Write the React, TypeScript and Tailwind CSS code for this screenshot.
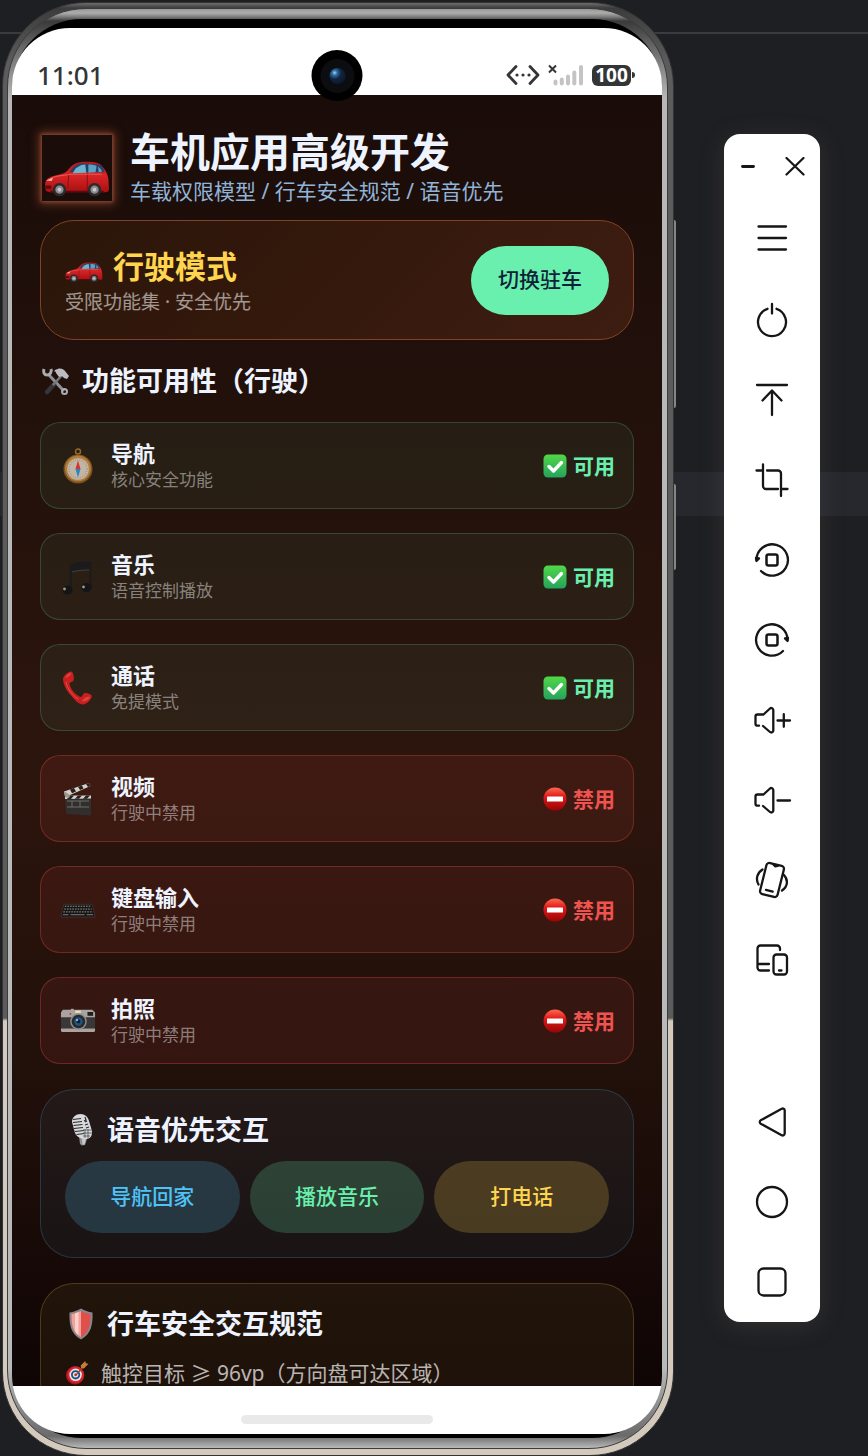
import { useState } from "react";
import type { ReactNode } from "react";
import clsx from "clsx";

type Feature = {
  id: string;
  name: string;
  desc: string;
  allowed: boolean;
  icon: ReactNode;
};

type ToolButton = {
  label: string;
  icon: ReactNode;
};

/* ---------- emoji style icons ---------- */

function CarIcon({ className }: { className: string }) {
  return (
    <svg viewBox="0 0 64 64" className={className} aria-hidden="true">
      <defs>
        <linearGradient id="carBody" x1="0" y1="0" x2="0" y2="1">
          <stop offset="0" stopColor="#b51a1c" />
          <stop offset="0.45" stopColor="#d82527" />
          <stop offset="1" stopColor="#a80f12" />
        </linearGradient>
      </defs>
      <path
        fill="url(#carBody)"
        d="M1 49c0-6 3-8 11-10 6-1 9-2 12-6 4-5 8-7 16-7 10 0 14 1 17 5 3 3 5 8 5.500 12l.5 9c0 3-2 3.500-5 3.500H6c-4 0-5-2-5-6.500z"
      />
      <path fill="#24416b" d="M25 36c3-5 7-8 13-8.500l17 1.500c2 2 3 4 3.500 7z" />
      <path fill="#6fb4cf" d="M28 37c2-5 6-8 12-8.500L41 36.500z" />
      <path fill="#5ba3c4" d="M43 28.500c4 0 6 .5 8 1.500l-1 6-7 .5zM52.500 30.500c2 1.500 3 3 4 5l-3.500.5z" />
      <path fill="none" stroke="#7d0c0f" strokeWidth="0.8" d="M42 37v17M24 38l-1 14" />
      <path fill="#f6b0a8" d="M2 44l7-3-1.500 3.500z" />
      <path fill="#5c0a0c" d="M1 49h6v3H1.500zM6 54h52v1.500H6z" />
      <path fill="none" stroke="#ff7a70" strokeWidth="0.6" d="M9 41c6-2 13-2 18-3h29" />
      {[15, 49].map((cx) => (
        <g key={cx}>
          <circle cx={cx} cy="53" r="6.500" fill="#2a2a2c" />
          <circle cx={cx} cy="53" r="4" fill="#8c8c90" />
          <circle cx={cx} cy="53" r="1.800" fill="#c9c9cc" />
        </g>
      ))}
    </svg>
  );
}

function ToolsIcon() {
  return (
    <svg viewBox="0 0 32 32" className="size-8" aria-hidden="true">
      <path stroke="#8d9094" strokeWidth="3" d="M8 9l16 17" />
      <path fill="none" stroke="#a9acb0" strokeWidth="3" d="M4 4c-1 3 0 6 3 6s5-3 4-6" />
      <circle cx="24.500" cy="26.500" r="2.500" fill="none" stroke="#a9acb0" strokeWidth="2" />
      <path stroke="#34363a" strokeWidth="4.500" strokeLinecap="round" d="M7 27l7-7.500" />
      <path stroke="#77797d" strokeWidth="2.500" d="M13 20L23 9" />
      <path fill="#b9bcc0" d="M15 5c4-2.500 8-2 10 1l4 5-2 3-3-1-2-2-3 1-3-4c0-1-1-2-2-1.500z" />
    </svg>
  );
}

function CompassIcon() {
  return (
    <svg viewBox="0 0 36 36" className="size-9" aria-hidden="true">
      <circle cx="18" cy="3.500" r="2.500" fill="none" stroke="#9a6a2c" strokeWidth="1.400" />
      <circle cx="18" cy="21" r="14.500" fill="#7d5120" />
      <circle cx="18" cy="20.600" r="13" fill="#b27c3c" />
      <circle cx="18" cy="21" r="10.800" fill="#c3b5a4" />
      <circle cx="18" cy="21" r="9" fill="none" stroke="#7c6c5c" strokeWidth="1" strokeDasharray="0.6 1.700" />
      <path fill="#d8322a" d="M18 12.500l2.500 8.500h-5z" />
      <path fill="#2687c4" d="M18 29.500l2.500-8.500h-5z" />
    </svg>
  );
}

function MusicIcon() {
  return (
    <svg viewBox="0 0 36 36" className="size-9" aria-hidden="true">
      <path fill="#1c1b1b" d="M9.500 6c7-3 14-4 22-4v27h-2V11c-6 0-12 .5-17.500 2v18H9.500z" />
      <ellipse cx="7.500" cy="31" rx="5" ry="4.500" fill="#151515" />
      <ellipse cx="26.500" cy="28.500" rx="5.200" ry="4.500" fill="#151515" />
      <path stroke="#4b4947" strokeWidth="0.800" fill="none" d="M12 13c5-1.500 11-2 17.500-2" />
      <circle cx="4.500" cy="30" r="1.400" fill="#9b9794" />
      <circle cx="23.500" cy="28" r="1.400" fill="#9b9794" />
    </svg>
  );
}

function PhoneIcon() {
  return (
    <svg viewBox="0 0 36 36" className="size-9" aria-hidden="true">
      <path
        fill="#c81f20"
        d="M3 8.500C4 5 9 1 11.500 1.500c2 1 3 7 2 9-1 1.500-3 1.500-4 2.500.5 6 6 12 11 14 2 0 2-3 4-4 2-.5 7 1 7.500 3-1 4-5 8-9 8.500-4 0-8-4-12-9C6 20 3 14 3 8.500z"
      />
      <path fill="none" stroke="#e8504a" strokeWidth="1" d="M6 12c1 6 6 13 12 17" />
      <path fill="#df423c" d="M5 8c1-3 4-5 6-5 1 2-4 5-6 5zM22 31c2-3 5-5 8-4-1 3-5 5-8 4z" />
    </svg>
  );
}

function ClapperIcon() {
  return (
    <svg viewBox="0 0 36 36" className="size-9" aria-hidden="true">
      <path fill="#302f2e" d="M5 17l26-1v17l-1 1.500L6 33z" />
      <path fill="#d5d0ca" d="M5 14.500h26v3L5 18z" />
      <path fill="#242322" d="M10 14.500h4l-3 3.500H7zM18 14.500h4l-3 3.300h-4zM26 14.500h4l-3 3.200h-4z" />
      <path fill="#d5d0ca" d="M4 10.500l25-8.500 1.500 3L10 14l-5 1z" />
      <path fill="#242322" d="M10 8.500l4-1.400 2 3.400-4 1.800zM18 5.800l4-1.400 1.500 3-3.500 1.600zM26 3l3-1 1.500 3-2.500 1z" />
      <path fill="#9b9791" d="M4 10l6 4-1 3-4-1z" />
      <path fill="none" stroke="#77736e" strokeWidth="0.900" d="M7 20h22M12 20v6M20 20v6M7 26h22" />
    </svg>
  );
}

function KeyboardIcon() {
  return (
    <svg viewBox="0 0 38 36" className="h-9 w-9" aria-hidden="true">
      <path fill="#141414" d="M4 12h30l3 13H1z" />
      <path stroke="#9c9692" strokeWidth="1" strokeDasharray="1.800 1" fill="none" d="M5 14h28M4.500 17h29M3.500 20h31" />
      <path stroke="#8a8480" strokeWidth="1" fill="none" d="M3 23h6M11 23h15M28 23h7" />
      <path stroke="#4b4441" strokeWidth="0.600" fill="none" d="M4 12h30l3 13.500H1z" />
    </svg>
  );
}

function CameraIcon() {
  return (
    <svg viewBox="0 0 38 36" className="h-9 w-9" aria-hidden="true">
      <path fill="#a9a49f" d="M1 9l2-3h8l1-1h2l1 1h19l3 3v6H1z" />
      <path fill="#3a3837" d="M1 14h36v12H1z" />
      <path fill="#a9a49f" d="M1 26h36v2.500l-1 1H2l-1-1z" />
      <rect x="29" y="8.500" width="6" height="4" fill="#1e1e1f" />
      <rect x="16" y="7" width="6" height="2.500" fill="#e5ddbf" />
      <circle cx="11" cy="10.500" r="1" fill="#b93a34" />
      <circle cx="19.500" cy="18.500" r="8.700" fill="#8f8b87" />
      <circle cx="19.500" cy="18.500" r="7.200" fill="#29292b" />
      <circle cx="19.500" cy="18.500" r="4.400" fill="#1f5686" />
      <circle cx="19.500" cy="18.500" r="2" fill="#0c1b2e" />
      <circle cx="18" cy="17" r="1.200" fill="#8cc6ee" />
    </svg>
  );
}

function CheckIcon() {
  return (
    <svg viewBox="0 0 24 24" className="size-6" aria-hidden="true">
      <defs>
        <linearGradient id="okFill" x1="0" y1="0" x2="0" y2="1">
          <stop offset="0" stopColor="#52d848" />
          <stop offset="1" stopColor="#24a35c" />
        </linearGradient>
      </defs>
      <rect x="0.500" y="0.500" width="23" height="23" rx="4.500" fill="url(#okFill)" />
      <path
        fill="none"
        stroke="#fff"
        strokeWidth="3.400"
        strokeLinecap="round"
        strokeLinejoin="round"
        d="M6 12.500l4.500 4.500L18.500 8.500"
      />
    </svg>
  );
}

function NoEntryIcon() {
  return (
    <svg viewBox="0 0 24 24" className="size-6" aria-hidden="true">
      <defs>
        <linearGradient id="banFill" x1="0" y1="0" x2="0" y2="1">
          <stop offset="0" stopColor="#ff6a50" />
          <stop offset="0.400" stopColor="#e01818" />
          <stop offset="1" stopColor="#980404" />
        </linearGradient>
      </defs>
      <circle cx="12" cy="12" r="11.500" fill="url(#banFill)" />
      <rect x="4" y="9.500" width="16" height="5" rx="0.500" fill="#fff" />
    </svg>
  );
}

function MicIcon() {
  return (
    <svg viewBox="0 0 32 32" className="size-8" aria-hidden="true">
      <path fill="#8f9092" d="M14 22l9 0-3 9-3 .5-2-1.500z" />
      <path fill="#d8d9da" d="M7 8c0-5 4-8 8.500-8C20 0 23 3 24 7l3 10c.5 5-2 8-6 8-5 0-9-2-11-6z" />
      <path
        fill="none"
        stroke="#2b2b2c"
        strokeWidth="1.200"
        d="M8 5.500l8-1M8 8.500l9-1M8.500 11.500l9-1M9 14.500l9-1M10 17.500l9-1M11.500 20.500l8-1M20 3l1 3-2 1M22 7l-2 1M23 10l-3 1M24 13l-3 1"
      />
      <path fill="none" stroke="#5b5c5e" strokeWidth="0.900" d="M18 16h9M18 19h9M18 22h7M20 15v9M23 15v9" />
      <path fill="#c7c8c9" d="M17 25h4l-1.500 5.500h-2z" />
    </svg>
  );
}

function ShieldIcon() {
  return (
    <svg viewBox="0 0 32 32" className="size-8" aria-hidden="true">
      <path fill="#85888f" d="M4.500 4.500C9 4 12 2.500 16 .5c4 2 7 3.500 11.500 4C28 17 26 26 16 31.500 6 26 4 17 4.500 4.500z" />
      <path fill="#e0504a" d="M6.500 6C10 5.500 13 4.500 16 3c3 1.500 6 2.500 9.500 3 .3 11-1.500 18.500-9.500 23.300C8 24.500 6.200 17 6.500 6z" />
      <path fill="#f2a19a" d="M6.500 6C10 5.500 13 4.500 16 3v26.300C8 24.500 6.200 17 6.500 6z" />
      <path fill="#f9d0ca" d="M10 5.300l3.500-1.200v23.200C12 26 11 24.500 10 22.500z" />
    </svg>
  );
}

function DartIcon() {
  return (
    <svg viewBox="0 0 26 26" className="h-6 w-6" aria-hidden="true">
      <circle cx="11" cy="15.500" r="10" fill="#a8141a" />
      <circle cx="11.500" cy="15" r="9" fill="#d5262b" />
      <circle cx="11.500" cy="15" r="6.800" fill="#e9e4e2" />
      <circle cx="11.500" cy="15" r="5" fill="#1e4c94" />
      <circle cx="11.500" cy="15" r="3" fill="#e9e4e2" />
      <circle cx="11.500" cy="15" r="1.500" fill="#c92328" />
      <path stroke="#8a4a20" strokeWidth="1.500" d="M12 15l8-9" />
      <path fill="#c97b3a" d="M17 5l5-5 .5 2.500 3 .5-5 5-3-.5z" />
    </svg>
  );
}

/* ---------- line icons of the side bar ---------- */

function LineIcon({ children }: { children: ReactNode }) {
  return (
    <svg
      viewBox="0 0 48 48"
      className="size-12"
      fill="none"
      stroke="#161616"
      strokeWidth="2.300"
      strokeLinecap="round"
      strokeLinejoin="round"
      aria-hidden="true"
    >
      {children}
    </svg>
  );
}

const SPEAKER =
  "M11 29.700H9.500a2 2 0 0 1-2-2v-7.200a2 2 0 0 1 2-2h6l6.500-6a2 2 0 0 1 3.300 1.500v20.500a2 2 0 0 1-3.300 1.500L15 30";

const toolButtons: ToolButton[] = [
  {
    label: "菜单",
    icon: <path d="M10.500 10.500h27.500M10.500 22h27.500M10.500 33.500h27.500" />,
  },
  {
    label: "电源",
    icon: <path d="M19.500 12.800a14 14 0 1 0 9 0M24 8v9.500" />,
  },
  {
    label: "上滑",
    icon: <path d="M9 9h30M24 39V15M14.500 24.500l9.500-10 9.500 10" />,
  },
  {
    label: "截图",
    icon: (
      <path d="M15 8.500V30a3 3 0 0 0 3 3h12M19 14.500h11a3 3 0 0 1 3 3V40M8.500 14.500H15M33 33h6.500" />
    ),
  },
  {
    label: "向左旋转",
    icon: (
      <>
        <path d="M8.500 24A15.700 15.700 0 1 1 13 35" />
        <path d="M8.500 25l-.5-3 3 .5z" fill="#161616" />
        <rect x="18.500" y="18.500" width="11" height="11" rx="2" strokeWidth="2.500" />
      </>
    ),
  },
  {
    label: "向右旋转",
    icon: (
      <>
        <path d="M39.500 24A15.700 15.700 0 1 0 35 35" />
        <path d="M39.500 25l.5-3-3 .5z" fill="#161616" />
        <rect x="18.500" y="18.500" width="11" height="11" rx="2" strokeWidth="2.500" />
      </>
    ),
  },
  {
    label: "音量加",
    icon: <path d={SPEAKER + "M29.500 24.500h12.500M35.800 18.200v12.600"} />,
  },
  {
    label: "音量减",
    icon: <path d={SPEAKER + "M29.500 24.500h12.500"} />,
  },
  {
    label: "摇一摇",
    icon: (
      <>
        <g transform="rotate(14 24 24)">
          <rect x="15" y="8" width="18" height="32" rx="3" />
          <path d="M21.500 8.500l2.500 1.500 2.500-1.500M20.500 35h7" />
        </g>
        <path d="M14.500 13.500C9 17 7.500 23 10.500 28.500M35.500 18.500c5 5 4.500 12-1.500 16" />
      </>
    ),
  },
  {
    label: "多设备",
    icon: (
      <>
        <path d="M32 14v-1.500a3 3 0 0 0-3-3H12.500a3 3 0 0 0-3 3v19a3 3 0 0 0 3 3H21M9.500 28H21" />
        <rect x="25.500" y="18.500" width="13.500" height="20" rx="3" />
        <path d="M31 34.500h2.500" />
      </>
    ),
  },
];

const navButtons: ToolButton[] = [
  {
    label: "返回",
    icon: (
      <path d="M12.700 25.700a2 2 0 0 1 0-3.400L33.700 10.800a2 2 0 0 1 3 1.700v23a2 2 0 0 1-3 1.700z" />
    ),
  },
  { label: "主页", icon: <circle cx="24" cy="24" r="15" /> },
  {
    label: "最近任务",
    icon: <rect x="10.500" y="10.500" width="27" height="27" rx="5" />,
  },
];

const features: Feature[] = [
  { id: "nav", name: "导航", desc: "核心安全功能", allowed: true, icon: <CompassIcon /> },
  { id: "music", name: "音乐", desc: "语音控制播放", allowed: true, icon: <MusicIcon /> },
  { id: "call", name: "通话", desc: "免提模式", allowed: true, icon: <PhoneIcon /> },
  { id: "video", name: "视频", desc: "行驶中禁用", allowed: false, icon: <ClapperIcon /> },
  { id: "keyboard", name: "键盘输入", desc: "行驶中禁用", allowed: false, icon: <KeyboardIcon /> },
  { id: "camera", name: "拍照", desc: "行驶中禁用", allowed: false, icon: <CameraIcon /> },
];

const voiceActions = [
  { label: "导航回家", className: "bg-[#4fc3f7]/20 text-[#4fc3f7]" },
  { label: "播放音乐", className: "bg-[#69f0ae]/20 text-[#69f0ae]" },
  { label: "打电话", className: "bg-[#ffd54f]/20 text-[#ffd54f]" },
];

function StatusBar() {
  return (
    <div className="flex h-[67px] shrink-0 items-center justify-between pt-[27px] pr-[27px] pl-[25px]">
      <span className="text-[26px] leading-10 font-medium text-[#333537]">
        11:01
      </span>
      <div className="flex items-center gap-2">
        <svg viewBox="0 0 34 22" className="h-[22px] w-[34px]" fill="none" aria-hidden="true">
          <path
            stroke="#333537"
            strokeWidth="2.800"
            strokeLinecap="round"
            strokeLinejoin="round"
            d="M10 2.500L2 11l8 8.500M24 2.500l8 8.500-8 8.500"
          />
          <circle cx="11" cy="11" r="1.600" fill="#333537" />
          <circle cx="17" cy="11" r="1.600" fill="#333537" />
          <circle cx="23" cy="11" r="1.600" fill="#333537" />
        </svg>
        <svg viewBox="0 0 36 22" className="h-[22px] w-9" fill="none" aria-hidden="true">
          <path stroke="#333537" strokeWidth="2" d="M1 1.500l7 7M8 1.500l-7 7" />
          <path
            stroke="#c4c4c4"
            strokeWidth="4"
            strokeLinecap="round"
            d="M7.500 17.500v2M13.800 15.500v4M20 12.500v7M26.300 8.500v11M33 3v16.500"
          />
        </svg>
        <div className="flex items-center gap-px">
          <span className="flex h-[21px] w-[39px] items-center justify-center rounded-md bg-[#333537] text-[19px] leading-5 font-bold text-white">
            100
          </span>
          <span className="h-1.5 w-[3px] rounded-r-sm bg-[#333537]" />
        </div>
      </div>
    </div>
  );
}

function FeatureRow({ feature }: { feature: Feature }) {
  return (
    <li
      className={clsx(
        "flex min-h-[87px] items-center gap-3.5 rounded-[20px] border px-[18px]",
        feature.allowed
          ? "border-[#69f0ae]/20 bg-[#69f0ae]/6"
          : "border-[#ef5350]/30 bg-[#ef5350]/9"
      )}
    >
      <span className="flex w-[38px] justify-center">{feature.icon}</span>
      <div className="flex-1">
        <h3 className="text-[22px] leading-7 font-bold text-[#eef4ff]">
          {feature.name}
        </h3>
        <p className="text-[17px] leading-[26px] text-white/45">{feature.desc}</p>
      </div>
      <span
        className={clsx(
          "flex items-center gap-1.5 text-[21px] leading-7 font-bold",
          feature.allowed ? "text-[#69f0ae]" : "text-[#ef5350]"
        )}
      >
        {feature.allowed ? <CheckIcon /> : <NoEntryIcon />}
        {feature.allowed ? "可用" : "禁用"}
      </span>
    </li>
  );
}

function CarApp() {
  const [driving, setDriving] = useState(true);

  return (
    <div className="min-h-0 flex-1 overflow-hidden bg-[linear-gradient(to_bottom,#1a0c09_0%,#2c150d_52%,#22100a_75%,#0f0505_100%)] px-7">
      <header className="flex items-center gap-4 pt-[34px] pb-[13px]">
        <div className="mx-0.5 flex h-[66px] w-[70px] items-center justify-center bg-[#1a0c08] shadow-[0_0_3px_1px_#8a4630,0_0_9px_3px_rgba(190,95,60,0.5)]">
          <CarIcon className="size-[66px]" />
        </div>
        <div>
          <h1 className="text-[40px] leading-[46px] font-bold text-[#eef4ff]">
            车机应用高级开发
          </h1>
          <p className="text-[21px] leading-8 text-[#90b4d8]">
            车载权限模型 / 行车安全规范 / 语音优先
          </p>
        </div>
      </header>

      <main className="flex flex-col gap-[25px]">
        <section className="flex min-h-[120px] items-center justify-between rounded-[34px] border border-[#7f4228] bg-[linear-gradient(135deg,#2a1609_0%,#34180c_45%,#3e1d11_100%)] px-6">
          <div>
            <h2 className="flex items-center gap-2.5 text-[31px] leading-[44px] font-bold text-[#ffd54f]">
              <CarIcon className="size-[38px]" />
              {driving ? "行驶模式" : "驻车模式"}
            </h2>
            <p className="text-[19px] leading-7 text-white/55">
              受限功能集 · 安全优先
            </p>
          </div>
          <button
            type="button"
            onClick={() => setDriving((prev) => !prev)}
            className="h-[69px] rounded-full bg-[#69f0ae] px-[27px] text-[21px] font-medium text-[#0d2137]"
          >
            {driving ? "切换驻车" : "切换行驶"}
          </button>
        </section>

        <h2 className="flex items-center gap-2.5 text-[27px] leading-8 font-bold text-[#eef4ff]">
          <ToolsIcon />
          功能可用性（行驶）
        </h2>

        <ul className="flex flex-col gap-6">
          {features.map((f) => (
            <FeatureRow key={f.id} feature={f} />
          ))}
        </ul>

        <section className="rounded-[34px] border border-[#4fc3f7]/20 bg-[#4fc3f7]/6 p-6">
          <h2 className="mb-[15px] flex items-center gap-2.5 text-[27px] leading-8 font-bold text-[#eef4ff]">
            <MicIcon />
            语音优先交互
          </h2>
          <div className="grid grid-cols-3 gap-2.5">
            {voiceActions.map((a) => (
              <button
                key={a.label}
                type="button"
                className={clsx("h-[72px] rounded-full text-[21px] font-medium", a.className)}
              >
                {a.label}
              </button>
            ))}
          </div>
        </section>

        <section className="rounded-[34px] border border-[#ffd54f]/20 bg-[#ffd54f]/6 p-6">
          <h2 className="mb-[15px] flex items-center gap-2.5 text-[27px] leading-8 font-bold text-[#eef4ff]">
            <ShieldIcon />
            行车安全交互规范
          </h2>
          <p className="flex items-center gap-3 text-[21px] leading-9 text-white/70">
            <DartIcon />
            触控目标 ≥ 96vp（方向盘可达区域）
          </p>
        </section>
      </main>
    </div>
  );
}

function Phone() {
  return (
    <div className="relative flex min-w-0 flex-1 pt-0.5">
      {/* volume and power keys */}
      <span className="absolute top-[220px] -right-0.5 h-[188px] w-1 rounded-sm bg-[#858585]" />
      <span className="absolute top-[484px] -right-0.5 h-[86px] w-1 rounded-sm bg-[#858585]" />

      {/* metal case, rim, black bezel, glass */}
      <div className="relative flex flex-1 rounded-[84px] border border-[#333333] bg-[linear-gradient(to_bottom,#6d6d6d_0px,#3c3c3c_5px,#5c5c5c_60px,#5c5c5c_1015px,#d3cabd_1018px)] pt-[5px] pr-[5px] pb-1.5 pl-1">
        <div className="flex flex-1 rounded-[79px] border border-[#3c3c3c] bg-[linear-gradient(to_bottom,#9a9a9a_0px,#acacac_4px,#7a7a7a_8px,#3a3a3a_12px,#6a6a6a_40px,#b8b8b8_90px,#b9bbbb_calc(100%-80px),#6a6a6a_calc(100%-12px),#bababa_100%)] pt-2.5 pr-[5px] pb-2.5 pl-1">
          <div className="flex flex-1 rounded-[70px] bg-black pt-[9px] pb-1">
            <div className="relative flex min-w-0 flex-1 flex-col overflow-hidden rounded-[58px] bg-white">
              <StatusBar />
              <CarApp />
              <div className="flex h-12 shrink-0 justify-center pt-[29px]">
                <span className="h-[9px] w-48 rounded-full bg-[#e9e9e9]" />
              </div>
              <div className="absolute top-[22px] left-1/2 flex size-[51px] -translate-x-1/2 items-center justify-center rounded-full bg-black">
                <div className="flex size-[34px] items-center justify-center rounded-full bg-[#0c0d10]">
                  <span className="size-4 rounded-full bg-[radial-gradient(circle_at_32%_30%,#9fd4f5_0%,#2f6da3_16%,#10233f_42%,#0a1322_100%)]" />
                </div>
              </div>
            </div>
          </div>
        </div>
      </div>
    </div>
  );
}

function SideBar() {
  return (
    <aside className="mt-[134px] flex w-24 shrink-0 flex-col self-start rounded-2xl bg-white shadow-[0_4px_24px_rgba(110,105,100,0.25)]">
      <div className="flex h-[66px] items-center justify-between pr-[15px] pl-3.5">
        <button type="button" aria-label="最小化">
          <svg viewBox="0 0 20 20" className="size-5" aria-hidden="true">
            <path stroke="#161616" strokeWidth="2.800" strokeLinecap="round" d="M4.500 9.500h11" />
          </svg>
        </button>
        <button type="button" aria-label="关闭">
          <svg viewBox="0 0 20 20" className="size-5" aria-hidden="true">
            <path stroke="#161616" strokeWidth="2.200" strokeLinecap="round" d="M1.500 1l17 16.500M18.500 1l-17 16.500" />
          </svg>
        </button>
      </div>
      {toolButtons.map((b) => (
        <button
          key={b.label}
          type="button"
          aria-label={b.label}
          className="flex h-20 items-center justify-center"
        >
          <LineIcon>{b.icon}</LineIcon>
        </button>
      ))}
      <nav className="mt-[82px] flex flex-col">
        {navButtons.map((b) => (
          <button
            key={b.label}
            type="button"
            aria-label={b.label}
            className="flex h-20 items-center justify-center"
          >
            <LineIcon>{b.icon}</LineIcon>
          </button>
        ))}
      </nav>
    </aside>
  );
}

export default function App() {
  return (
    <div className="flex h-screen gap-[50px] overflow-hidden bg-[linear-gradient(to_bottom,#1e1f22_32px,#393b40_32px,#393b40_34px,#1e1f22_34px,#1e1f22_472px,#26282e_472px,#26282e_516px,#1e1f22_516px)] pr-12 pl-0.5 font-['Noto_Sans','Noto_Sans_CJK_SC',sans-serif]">
      <Phone />
      <SideBar />
    </div>
  );
}
